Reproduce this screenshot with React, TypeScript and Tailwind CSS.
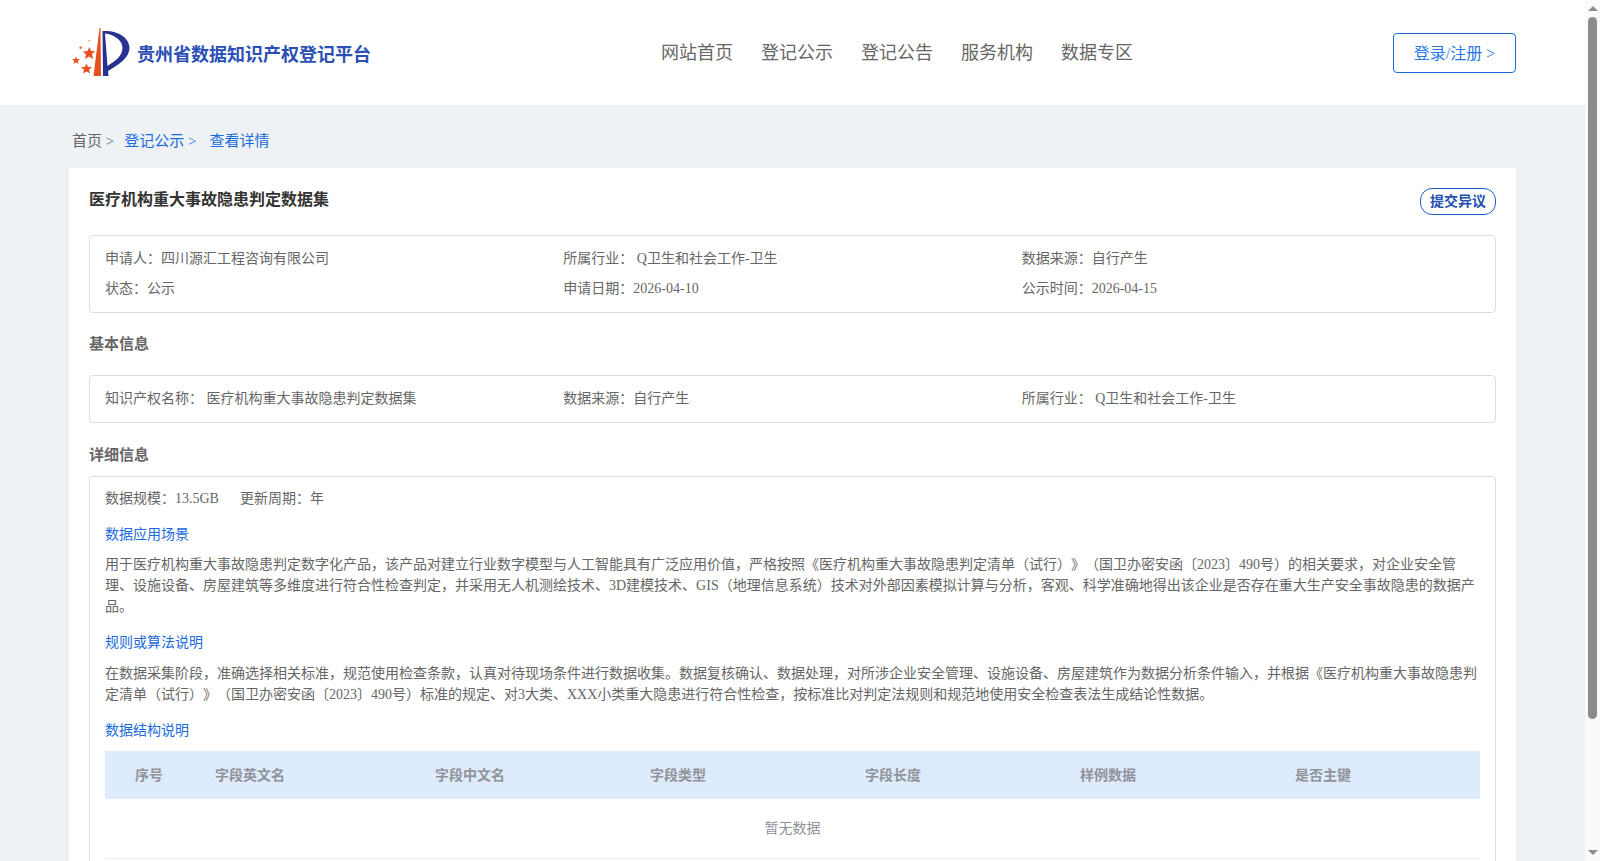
const font = "[font-family:'Liberation_Serif','Noto_Sans_CJK_SC',serif]";

function Logo() {
  return (
    <svg width="68" height="65" viewBox="0 0 68 65" className="shrink-0">
      <path d="M34.5 8 L28.5 56 L36 56 L35.5 8 Z" fill="#e8501f" />
      <path
        d="M37.5 11 C50 10 64.5 16 64.5 28 C64.5 38 53 45 43 51 L43.5 56 L38 56 Z M40 13.5 L42.5 46 C50 41 57.5 36 57.5 28 C57.5 20 49 14.5 40 13.5 Z"
        fill="#26328f"
        fillRule="evenodd"
      />
      <path d="M24.5 27 L26 31 L30 31 L27 34 L28 39 L24 36.5 L20 39 L21 34.5 L18 31.5 L22.5 31 Z" fill="#e8501f" />
      <path d="M11 36.5 L12 39 L15 39 L12.7 41 L13.5 44 L11 42.3 L8.5 44 L9.3 41 L7 39 L10 39 Z" fill="#e8501f" />
      <path d="M21.5 43.5 L23 47 L27 47 L24 49.7 L25 53.5 L21.5 51.5 L18 53.5 L19 49.7 L16 47 L20 47 Z" fill="#e8501f" />
      <circle cx="15.7" cy="27.7" r="1.4" fill="#ee7a50" />
      <circle cx="24.3" cy="20.7" r="1" fill="#f09a78" />
    </svg>
  );
}

function FakeScrollbar() {
  return (
    <div className="w-[15px] h-full shrink-0 bg-[#fafafa] flex flex-col items-center">
      <div className="h-[17px] flex items-center justify-center shrink-0">
        <div className="w-0 h-0 border-x-[5px] border-x-transparent border-b-[5px] border-b-[#8c8c8c]" />
      </div>
      <div className="w-[9px] h-[702px] rounded-full bg-[#8c8c8c]" />
      <div className="flex-1" />
      <div className="h-[17px] flex items-center justify-center shrink-0">
        <div className="w-0 h-0 border-x-[5px] border-x-transparent border-t-[5px] border-t-[#8c8c8c]" />
      </div>
    </div>
  );
}

const navItems = ["网站首页", "登记公示", "登记公告", "服务机构", "数据专区"];
const columns = [
  { label: "序号", cls: "w-[80px]" },
  { label: "字段英文名", cls: "w-[220px]" },
  { label: "字段中文名", cls: "w-[215px]" },
  { label: "字段类型", cls: "w-[215px]" },
  { label: "字段长度", cls: "w-[215px]" },
  { label: "样例数据", cls: "w-[215px]" },
  { label: "是否主键", cls: "flex-1" },
];

function Row({ items }: { items: string[] }) {
  return (
    <div className="grid grid-cols-3 h-[30px] items-center">
      {items.map((t) => (
        <div key={t}>{t}</div>
      ))}
    </div>
  );
}

export default function App() {
  return (
    <div className={`h-screen w-full flex overflow-hidden text-[14px] text-[#666] bg-[#eff2f5] [text-spacing-trim:space-all] ${font}`}>
      <div className="flex-1 min-w-0 overflow-hidden">
        <header className="h-[105px] bg-white flex items-center pl-[65px] pr-[69px]">
          <div className="w-[500px] flex items-center gap-[4px] text-[18px] font-bold text-[#2b4fb5]">
            <Logo />
            <span className="mt-[6px]">贵州省数据知识产权登记平台</span>
          </div>
          <nav className="flex gap-[28px] ml-[96px] text-[18px] text-[#666] mt-[1px]">
            {navItems.map((n) => (
              <span key={n}>{n}</span>
            ))}
          </nav>
          <button className="ml-auto w-[123px] h-[40px] pt-[2px] rounded-[4px] border border-[#1a6ae0] bg-white text-[16px] text-[#2a78e4]">
            登录/注册 &gt;
          </button>
        </header>

        <div className="px-[69px]">
          <div className="h-[63px] flex items-center pl-[3px] text-[15px] pt-[10px]">
            <span>首页 &gt;</span>
            <span className="ml-[10px] text-[#1a6ae0]">登记公示 &gt;</span>
            <span className="ml-[13px] text-[#1a6ae0]">查看详情</span>
          </div>

          <div className="bg-white px-[20px] h-[800px]">
            <div className="flex items-start justify-between pt-[20px] h-[67px]">
              <h1 className="text-[16px] font-bold text-[#333] leading-[24px]">医疗机构重大事故隐患判定数据集</h1>
              <button className="w-[76px] h-[27px] rounded-[12px] border border-[#1a5fd0] text-[14px] font-bold text-[#234fb0]">
                提交异议
              </button>
            </div>

            <div className="border border-[#ddd] rounded-[4px] px-[15px] py-[7px] h-[78px]">
              <Row items={["申请人：四川源汇工程咨询有限公司", "所属行业： Q卫生和社会工作-卫生", "数据来源：自行产生"]} />
              <Row items={["状态：公示", "申请日期：2026-04-10", "公示时间：2026-04-15"]} />
            </div>

            <h2 className="mt-[20px] mb-[20px] text-[15px] font-bold leading-[22px]">基本信息</h2>

            <div className="border border-[#ddd] rounded-[4px] px-[15px] pt-[7px] h-[48px]">
              <Row items={["知识产权名称： 医疗机构重大事故隐患判定数据集", "数据来源：自行产生", "所属行业： Q卫生和社会工作-卫生"]} />
            </div>

            <h2 className="mt-[21px] mb-[10px] text-[15px] font-bold leading-[22px]">详细信息</h2>

            <div className="border border-[#ddd] rounded-[4px] px-[15px] pt-[11px] h-[500px]">
              <div className="leading-[21px] flex gap-[21px]">
                <span>数据规模：13.5GB</span>
                <span>更新周期：年</span>
              </div>
              <div className="mt-[15px] leading-[21px] text-[#1a6ae0]">数据应用场景</div>
              <p className="mt-[9px] leading-[21px]">
                用于医疗机构重大事故隐患判定数字化产品，该产品对建立行业数字模型与人工智能具有广泛应用价值，严格按照《医疗机构重大事故隐患判定清单（试行）》（国卫办密安函〔2023〕490号）的相关要求，对企业安全管理、设施设备、房屋建筑等多维度进行符合性检查判定，并采用无人机测绘技术、3D建模技术、GIS（地理信息系统）技术对外部因素模拟计算与分析，客观、科学准确地得出该企业是否存在重大生产安全事故隐患的数据产品。
              </p>
              <div className="mt-[15px] leading-[21px] text-[#1a6ae0]">规则或算法说明</div>
              <p className="mt-[10px] leading-[21px]">
                在数据采集阶段，准确选择相关标准，规范使用检查条款，认真对待现场条件进行数据收集。数据复核确认、数据处理，对所涉企业安全管理、设施设备、房屋建筑作为数据分析条件输入，并根据《医疗机构重大事故隐患判定清单（试行）》（国卫办密安函〔2023〕490号）标准的规定、对3大类、XXX小类重大隐患进行符合性检查，按标准比对判定法规则和规范地使用安全检查表法生成结论性数据。
              </p>
              <div className="mt-[15px] leading-[21px] text-[#1a6ae0]">数据结构说明</div>
              <div className="mt-[10px] h-[48px] bg-[#deebfc] flex items-center font-bold text-[#909399]">
                {columns.map((c) => (
                  <div key={c.label} className={`${c.cls} pl-[30px]`}>
                    {c.label}
                  </div>
                ))}
              </div>
              <div className="h-[60px] border-b border-[#ebeef5] flex items-center justify-center text-[#909399]">
                暂无数据
              </div>
            </div>
          </div>
        </div>
      </div>
      <FakeScrollbar />
    </div>
  );
}
